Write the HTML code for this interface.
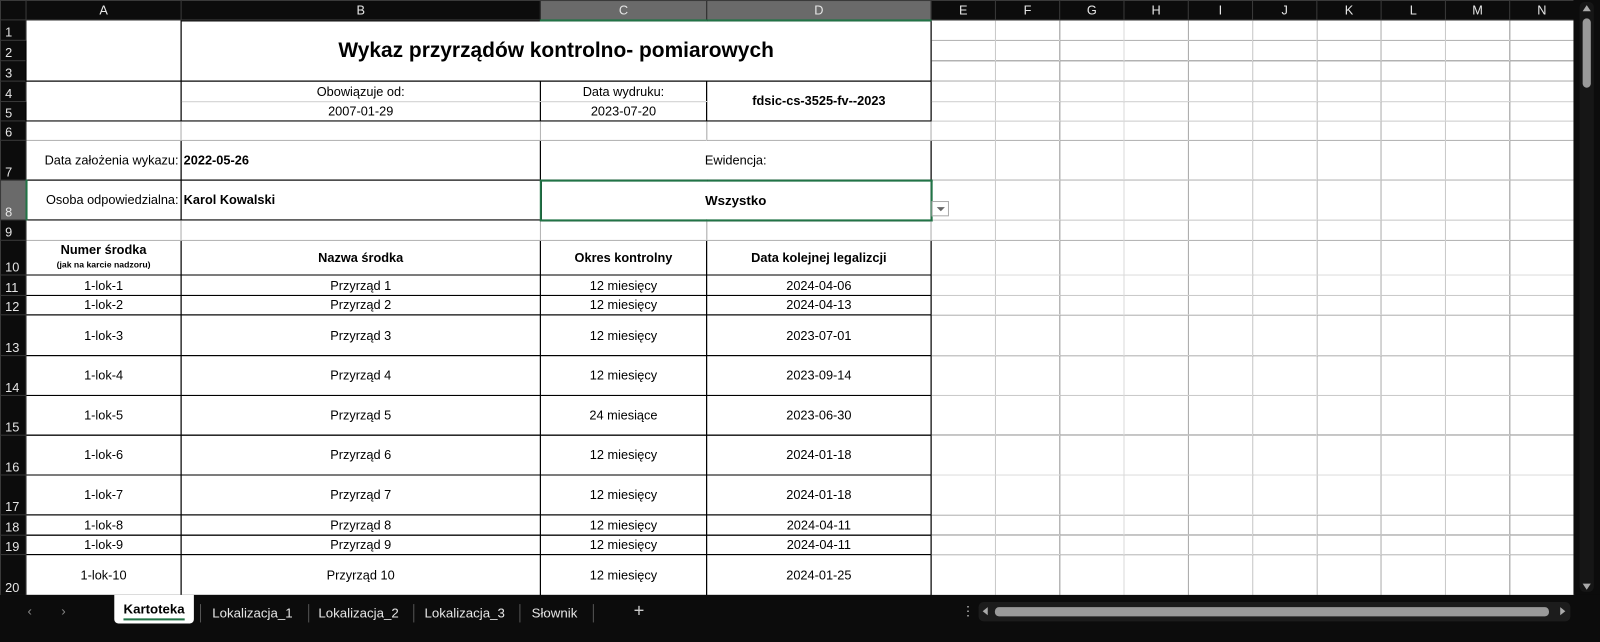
<!DOCTYPE html>
<html><head><meta charset="utf-8"><style>
*{margin:0;padding:0;box-sizing:border-box}
body{width:1600px;height:629px;background:#0c0c0c;overflow:hidden;font-family:"Liberation Sans",sans-serif;position:relative}
#w{position:absolute;left:0;top:0;width:1568px;height:617px;transform:scale(1.020408);transform-origin:0 0}
table{position:absolute;left:0;top:0;border-collapse:collapse;table-layout:fixed;width:1542px}
td{border:1px solid #dcdcdc;background:#fff;font-size:12.5px;color:#000;text-align:center;vertical-align:middle;white-space:nowrap;overflow:hidden;padding:0 2px}
td.h{background:#0c0c0c;color:#e6e6e6;border:1px solid #3a3a3a;font-size:12.5px}
td.rh{background:#0c0c0c;color:#e6e6e6;border:1px solid #3a3a3a;vertical-align:bottom;text-align:left;padding-left:4px;font-size:12.5px}
td.sel{background:#6a6a6a;border-bottom:2px solid #217346}
td.rsel{background:#6a6a6a;border-right:2px solid #217346}
.k{border:1px solid #000}
.b{font-weight:bold}
.l{text-align:left}
</style></head><body><div id="w">
<table>
<colgroup><col style="width:25px"><col style="width:152px"><col style="width:352px"><col style="width:163px"><col style="width:220px"><col span="10" style="width:63px"></colgroup>
<tr style="height:19px"><td class="h"></td><td class="h">A</td><td class="h">B</td><td class="h sel">C</td><td class="h sel">D</td><td class="h">E</td><td class="h">F</td><td class="h">G</td><td class="h">H</td><td class="h">I</td><td class="h">J</td><td class="h">K</td><td class="h">L</td><td class="h">M</td><td class="h">N</td></tr>
<tr style="height:20px"><td class="rh">1</td><td class="k" rowspan="3"></td><td class="k b" colspan="3" rowspan="3" style="font-size:20.5px">Wykaz przyrządów kontrolno- pomiarowych</td><td></td><td></td><td></td><td></td><td></td><td></td><td></td><td></td><td></td><td></td></tr>
<tr style="height:20px"><td class="rh">2</td><td></td><td></td><td></td><td></td><td></td><td></td><td></td><td></td><td></td><td></td></tr>
<tr style="height:20px"><td class="rh">3</td><td></td><td></td><td></td><td></td><td></td><td></td><td></td><td></td><td></td><td></td></tr>
<tr style="height:20px"><td class="rh">4</td><td class="k" rowspan="2"></td><td class="k" style="border-bottom-color:#dcdcdc">Obowiązuje od:</td><td class="k" style="border-bottom-color:#dcdcdc">Data wydruku:</td><td class="k b" rowspan="2">fdsic-cs-3525-fv--2023</td><td></td><td></td><td></td><td></td><td></td><td></td><td></td><td></td><td></td><td></td></tr>
<tr style="height:19px"><td class="rh">5</td><td class="k" style="border-top-color:#dcdcdc">2007-01-29</td><td class="k" style="border-top-color:#dcdcdc">2023-07-20</td><td></td><td></td><td></td><td></td><td></td><td></td><td></td><td></td><td></td><td></td></tr>
<tr style="height:19px"><td class="rh">6</td><td></td><td></td><td></td><td></td><td></td><td></td><td></td><td></td><td></td><td></td><td></td><td></td><td></td><td></td></tr>
<tr style="height:39px"><td class="rh">7</td><td class="k" style="text-align:right">Data założenia wykazu:</td><td class="k b l">2022-05-26</td><td class="k" colspan="2">Ewidencja:</td><td></td><td></td><td></td><td></td><td></td><td></td><td></td><td></td><td></td><td></td></tr>
<tr style="height:39px"><td class="rh rsel">8</td><td class="k" style="text-align:right">Osoba odpowiedzialna:</td><td class="k b l">Karol Kowalski</td><td class="b" colspan="2" style="border:2px solid #217346;font-size:13px">Wszystko</td><td></td><td></td><td></td><td></td><td></td><td></td><td></td><td></td><td></td><td></td></tr>
<tr style="height:20px"><td class="rh">9</td><td></td><td></td><td></td><td></td><td></td><td></td><td></td><td></td><td></td><td></td><td></td><td></td><td></td><td></td></tr>
<tr style="height:34px"><td class="rh">10</td><td class="k b" style="line-height:13px">Numer środka<br><span style="font-size:8.5px">(jak na karcie nadzoru)</span></td><td class="k b">Nazwa środka</td><td class="k b">Okres kontrolny</td><td class="k b">Data kolejnej legalizcji</td><td></td><td></td><td></td><td></td><td></td><td></td><td></td><td></td><td></td><td></td></tr>
<tr style="height:20px"><td class="rh">11</td><td class="k">1-lok-1</td><td class="k">Przyrząd 1</td><td class="k">12 miesięcy</td><td class="k">2024-04-06</td><td></td><td></td><td></td><td></td><td></td><td></td><td></td><td></td><td></td><td></td></tr>
<tr style="height:19px"><td class="rh">12</td><td class="k">1-lok-2</td><td class="k">Przyrząd 2</td><td class="k">12 miesięcy</td><td class="k">2024-04-13</td><td></td><td></td><td></td><td></td><td></td><td></td><td></td><td></td><td></td><td></td></tr>
<tr style="height:40px"><td class="rh">13</td><td class="k">1-lok-3</td><td class="k">Przyrząd 3</td><td class="k">12 miesięcy</td><td class="k">2023-07-01</td><td></td><td></td><td></td><td></td><td></td><td></td><td></td><td></td><td></td><td></td></tr>
<tr style="height:39px"><td class="rh">14</td><td class="k">1-lok-4</td><td class="k">Przyrząd 4</td><td class="k">12 miesięcy</td><td class="k">2023-09-14</td><td></td><td></td><td></td><td></td><td></td><td></td><td></td><td></td><td></td><td></td></tr>
<tr style="height:39px"><td class="rh">15</td><td class="k">1-lok-5</td><td class="k">Przyrząd 5</td><td class="k">24 miesiące</td><td class="k">2023-06-30</td><td></td><td></td><td></td><td></td><td></td><td></td><td></td><td></td><td></td><td></td></tr>
<tr style="height:39px"><td class="rh">16</td><td class="k">1-lok-6</td><td class="k">Przyrząd 6</td><td class="k">12 miesięcy</td><td class="k">2024-01-18</td><td></td><td></td><td></td><td></td><td></td><td></td><td></td><td></td><td></td><td></td></tr>
<tr style="height:39px"><td class="rh">17</td><td class="k">1-lok-7</td><td class="k">Przyrząd 7</td><td class="k">12 miesięcy</td><td class="k">2024-01-18</td><td></td><td></td><td></td><td></td><td></td><td></td><td></td><td></td><td></td><td></td></tr>
<tr style="height:20px"><td class="rh">18</td><td class="k">1-lok-8</td><td class="k">Przyrząd 8</td><td class="k">12 miesięcy</td><td class="k">2024-04-11</td><td></td><td></td><td></td><td></td><td></td><td></td><td></td><td></td><td></td><td></td></tr>
<tr style="height:19px"><td class="rh">19</td><td class="k">1-lok-9</td><td class="k">Przyrząd 9</td><td class="k">12 miesięcy</td><td class="k">2024-04-11</td><td></td><td></td><td></td><td></td><td></td><td></td><td></td><td></td><td></td><td></td></tr>
<tr style="height:40px"><td class="rh">20</td><td class="k">1-lok-10</td><td class="k">Przyrząd 10</td><td class="k">12 miesięcy</td><td class="k">2024-01-25</td><td></td><td></td><td></td><td></td><td></td><td></td><td></td><td></td><td></td><td></td></tr>
</table>
<div style="position:absolute;left:913px;top:197px;width:17px;height:15px;background:#fff;border:1px solid #aaa"><div style="position:absolute;left:4px;top:5px;border-left:4px solid transparent;border-right:4px solid transparent;border-top:4px solid #666"></div></div>
<div style="position:absolute;left:1542px;top:0;width:26px;height:583px;background:#0c0c0c"></div>
<div style="position:absolute;left:1548px;top:2px;width:14px;height:578px;background:#161616;border-radius:5px"></div>
<div style="position:absolute;left:1551px;top:5px;border-left:4px solid transparent;border-right:4px solid transparent;border-bottom:6px solid #aaa"></div>
<div style="position:absolute;left:1551px;top:18px;width:8px;height:68px;background:#9a9a9a;border-radius:4px"></div>
<div style="position:absolute;left:1551px;top:572px;border-left:4px solid transparent;border-right:4px solid transparent;border-top:6px solid #aaa"></div>
<div style="position:absolute;left:0;top:583px;width:1568px;height:46px;background:#0c0c0c;color:#e6e6e6;font-size:13px">
<span style="position:absolute;left:27px;top:8px;color:#888">‹</span><span style="position:absolute;left:60px;top:8px;color:#888">›</span>
<div style="position:absolute;left:112px;top:0;width:78px;height:28px;background:#fff;border-radius:0 0 4px 4px;color:#000;font-weight:bold;text-align:center;line-height:28px">Kartoteka<div style="position:absolute;left:9px;right:9px;bottom:3px;height:2px;background:#217346"></div></div>
<span style="position:absolute;left:208px;top:10px">Lokalizacja_1</span>
<span style="position:absolute;left:312px;top:10px">Lokalizacja_2</span>
<span style="position:absolute;left:416px;top:10px">Lokalizacja_3</span>
<span style="position:absolute;left:521px;top:10px">Słownik</span>
<span style="position:absolute;left:196px;top:9px;width:1px;height:18px;background:#555"></span>
<span style="position:absolute;left:302px;top:9px;width:1px;height:18px;background:#555"></span>
<span style="position:absolute;left:405px;top:9px;width:1px;height:18px;background:#555"></span>
<span style="position:absolute;left:509px;top:9px;width:1px;height:18px;background:#555"></span>
<span style="position:absolute;left:581px;top:9px;width:1px;height:18px;background:#555"></span>
<span style="position:absolute;left:621px;top:5px;font-size:18px;color:#ccc">+</span>
<span style="position:absolute;left:942px;top:8px;color:#bbb">⋮</span>
<div style="position:absolute;left:959px;top:7px;width:580px;height:19px;background:#1c1c1c;border-radius:5px"></div>
<div style="position:absolute;left:963px;top:12px;border-top:4px solid transparent;border-bottom:4px solid transparent;border-right:5px solid #aaa"></div>
<div style="position:absolute;left:975px;top:12px;width:543px;height:9px;background:#9a9a9a;border-radius:4px"></div>
<div style="position:absolute;left:1529px;top:12px;border-top:4px solid transparent;border-bottom:4px solid transparent;border-left:5px solid #aaa"></div>
</div>
</div></body></html>
